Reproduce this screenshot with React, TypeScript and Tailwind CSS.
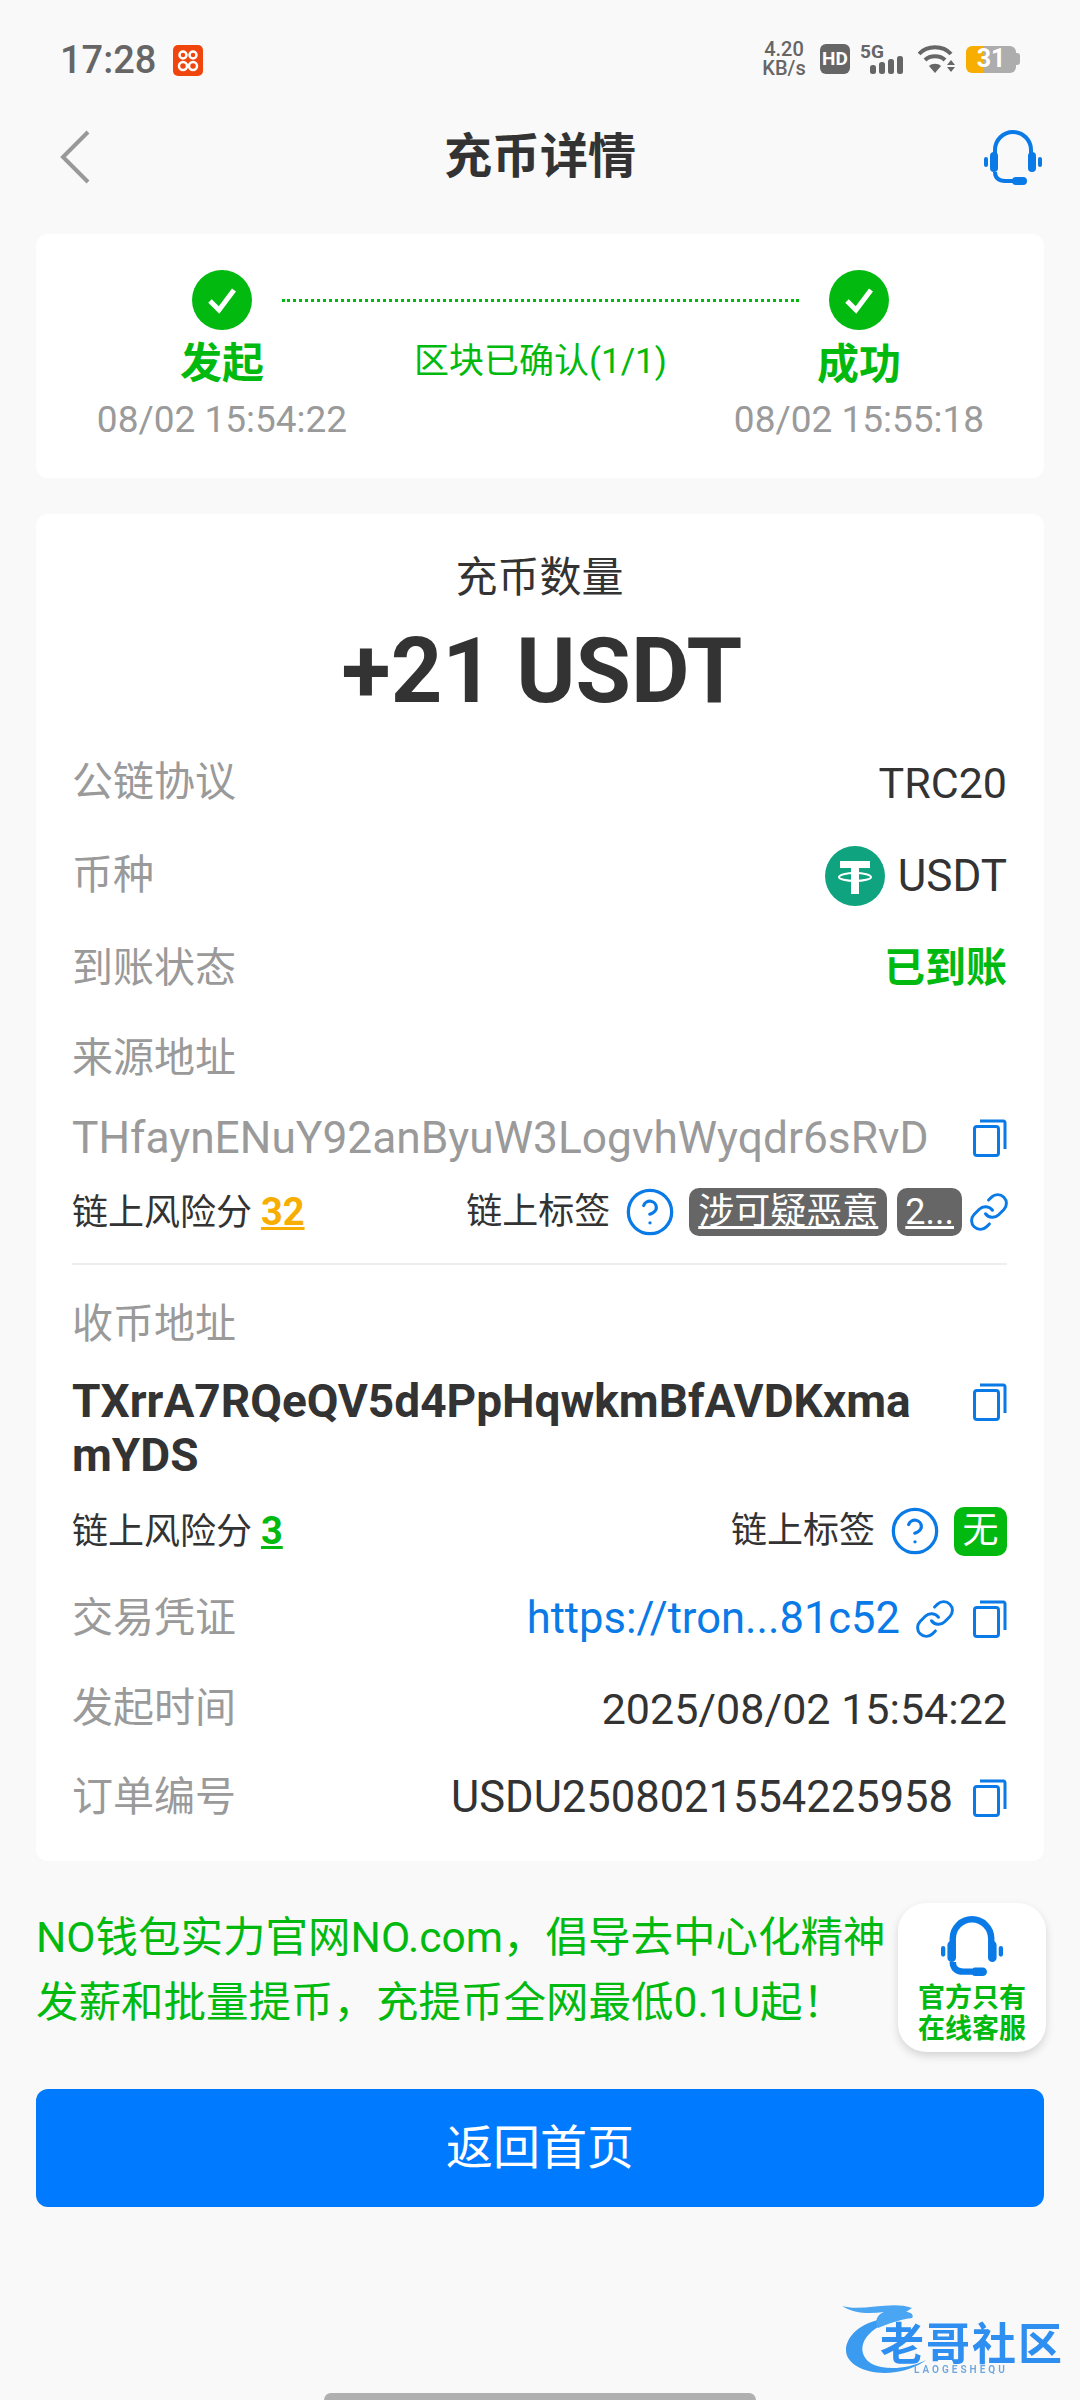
import { CircleHelp, Link } from 'lucide-react';

const green = 'text-[#02b90f]';

function CopyIcon({ className = '' }: { className?: string }) {
  return (
    <svg width="34" height="38" viewBox="0 0 34 38" fill="none" stroke="#0a7ae6" strokeWidth="3" className={`shrink-0 ${className}`}>
      <rect x="1.5" y="7.5" width="24" height="29" rx="2.5" />
      <path d="M7 2h23.5a2 2 0 0 1 1.5 2v26" />
    </svg>
  );
}

function Headset({ size, stroke = 4 }: { size: number; stroke?: number }) {
  return (
    <svg width={size} height={size} viewBox="0 0 58 58" fill="none" className="shrink-0">
      <path d="M11 29V22a18 18 0 0 1 36 0v7" stroke="#0a7ae6" strokeWidth={stroke} />
      <rect x="6" y="24" width="8" height="20" rx="4" fill="#0a7ae6" />
      <rect x="44" y="24" width="8" height="20" rx="4" fill="#0a7ae6" />
      <rect x="0" y="29" width="4" height="10" rx="2" fill="#0a7ae6" />
      <rect x="54" y="29" width="4" height="10" rx="2" fill="#0a7ae6" />
      <path d="M11 44c0 6 4 9 10 9h8" stroke="#0a7ae6" strokeWidth={stroke} />
      <rect x="28" y="49" width="15" height="8" rx="4" fill="#0a7ae6" />
    </svg>
  );
}

function CheckDot() {
  return (
    <svg width="60" height="60" viewBox="0 0 60 60" className="shrink-0">
      <circle cx="30" cy="30" r="30" fill="#02b90f" />
      <path d="M18 31l9 9 15-20" fill="none" stroke="#fff" strokeWidth="5" />
    </svg>
  );
}

function InfoRow({ label, children, className = '' }: { label: string; children?: React.ReactNode; className?: string }) {
  return (
    <div className={`flex h-[60px] items-center justify-between ${className}`}>
      <span className="text-[41px] text-[#9a9a9a]">{label}</span>
      {children}
    </div>
  );
}

function RiskRow({ score, scoreColor, children, className = '' }: { score: string; scoreColor: string; children: React.ReactNode; className?: string }) {
  return (
    <div className={`flex h-[50px] items-center justify-between text-[36px] text-[#333] ${className}`}>
      <span>
        链上风险分 <span className={`text-[38px] font-bold underline ${scoreColor}`}>{score}</span>
      </span>
      <div className="flex items-center">
        <span>链上标签</span>
        <CircleHelp size={52} strokeWidth={1.5} className="ml-[14px] text-[#0a7ae6]" />
        {children}
      </div>
    </div>
  );
}

export default function App() {
  return (
    <div className="relative h-[2400px] w-[1080px] overflow-hidden bg-[#f9f9f9] font-[Roboto,'Noto_Sans_CJK_SC',sans-serif] text-[#333]">
      {/* status bar */}
      <div className="flex h-[118px] items-start justify-between pl-[60px] pr-[60px] pt-[40px]">
        <div className="flex h-[40px] items-center">
          <span className="text-[38px] font-medium text-[#666]">17:28</span>
          <svg width="30" height="31" viewBox="0 0 30 31" className="ml-[17px]">
            <rect width="30" height="31" rx="5" fill="#f0460e" />
            <g fill="none" stroke="#fff" strokeWidth="2.5">
              <circle cx="10" cy="10" r="3.5" />
              <circle cx="20" cy="10" r="3.5" />
              <circle cx="10" cy="21" r="4" />
              <circle cx="20" cy="21" r="4" />
            </g>
          </svg>
        </div>
        <div className="flex items-center text-[#666]">
          <div className="flex w-[50px] flex-col items-center text-[20px] font-medium leading-[19px]">
            <span>4.20</span>
            <span>KB/s</span>
          </div>
          <div className="ml-[11px] flex h-[30px] w-[30px] items-center justify-center rounded-[6px] bg-[#666] text-[19px] font-bold text-white">HD</div>
          <svg width="46" height="32" viewBox="0 0 46 32" className="ml-[10px]">
            <text x="0" y="15" fontSize="19" fontWeight="700" fill="#666" fontFamily="Roboto">5G</text>
            <rect x="10" y="22" width="6" height="9" rx="2.5" fill="#666" />
            <rect x="19" y="19" width="6" height="12" rx="2.5" fill="#666" />
            <rect x="28" y="16" width="6" height="15" rx="2.5" fill="#666" />
            <rect x="37" y="13" width="6" height="18" rx="2.5" fill="#666" />
          </svg>
          <svg width="38" height="30" viewBox="0 0 38 30" className="ml-[12px]">
            <g fill="none" stroke="#666" strokeWidth="4">
              <path d="M1 10c8-9 24-9 32 0" />
              <path d="M7 16c5-5 15-5 20 0" />
            </g>
            <path d="M11 22c3-3 9-3 12 0l-6 7z" fill="#666" />
            <path d="M33 16l4 5h-8zM33 28l4-5h-8z" fill="#666" />
          </svg>
          <div className="ml-[10px] flex items-center">
            <div className="flex h-[27px] w-[50px] items-center justify-center rounded-[6px] bg-[linear-gradient(90deg,#f7ae00_36%,#adadad_36%)] text-[25px] font-bold text-white">31</div>
            <div className="h-[12px] w-[4px] rounded-r-[3px] bg-[#adadad]" />
          </div>
        </div>
      </div>

      {/* nav */}
      <div className="flex h-[78px] items-center px-[38px]">
        <div className="flex-1">
          <svg width="30" height="54" viewBox="0 0 30 54" fill="none" stroke="#999" strokeWidth="4" className="ml-[22px]">
            <path d="M28 2L3 27l25 25" />
          </svg>
        </div>
        <h1 className="text-[48px] font-bold leading-none text-[#333]">充币详情</h1>
        <div className="flex flex-1 justify-end">
          <Headset size={58} />
        </div>
      </div>

      {/* steps card */}
      <div className="mx-[36px] mt-[38px] h-[244px] rounded-[12px] bg-white pt-[36px]">
        <div className="flex items-center gap-[30px] pl-[156px] pr-[155px]">
          <CheckDot />
          <div className="flex-1 border-t-[3px] border-dotted border-[#02b90f]" />
          <CheckDot />
        </div>
        <div className="flex pl-[61px] pr-[62px]">
          <div className="flex w-[250px] flex-col items-center">
            <span className={`h-[66px] text-[42px] font-bold leading-[68px] ${green}`}>发起</span>
            <span className="whitespace-nowrap text-[37px] leading-[48px] text-[#9a9a9a]">08/02 15:54:22</span>
          </div>
          <div className="flex-1 pr-[2px] text-center">
            <span className={`text-[35px] leading-[64px] ${green}`}>区块已确认(1/1)</span>
          </div>
          <div className="flex w-[246px] flex-col items-center">
            <span className={`h-[66px] text-[42px] font-bold leading-[70px] ${green}`}>成功</span>
            <span className="whitespace-nowrap text-[37px] leading-[48px] text-[#9a9a9a]">08/02 15:55:18</span>
          </div>
        </div>
      </div>

      {/* detail card */}
      <div className="mx-[36px] mt-[36px] rounded-[12px] bg-white pb-[33px] pl-[36px] pr-[37px] pt-[34px]">
        <div className="h-[60px] text-center text-[42px] leading-[60px]">充币数量</div>
        <div className="mt-[14px] h-[100px] pl-[5px] text-center text-[90px] font-bold leading-[100px]">+21 USDT</div>

        <InfoRow label="公链协议" className="mt-[31px]">
          <span className="text-[43px]">TRC20</span>
        </InfoRow>
        <InfoRow label="币种" className="mt-[33px]">
          <div className="flex items-center">
            <svg width="60" height="60" viewBox="0 0 60 60">
              <circle cx="30" cy="30" r="30" fill="#0fa37f" />
              <path d="M15 15h30v7H34v7.5l-8 0V22H15z" fill="#fff" />
              <rect x="26" y="24" width="8" height="24" fill="#fff" />
              <ellipse cx="30" cy="31" rx="16" ry="4" fill="none" stroke="#fff" strokeWidth="2" />
            </svg>
            <span className="ml-[13px] text-[44px]">USDT</span>
          </div>
        </InfoRow>
        <InfoRow label="到账状态" className="mt-[33px]">
          <span className={`text-[41px] font-bold ${green}`}>已到账</span>
        </InfoRow>
        <InfoRow label="来源地址" className="mt-[30px]" />

        <div className="mt-[19px] flex h-[60px] items-center justify-between">
          <span className="text-[44.3px] text-[#9a9a9a]">THfaynENuY92anByuW3LogvhWyqdr6sRvD</span>
          <CopyIcon />
        </div>

        <RiskRow score="32" scoreColor="text-[#f7ae00]" className="mt-[19px]">
          <span className="ml-[13px] rounded-[10px] bg-[#666] px-[9px] py-[2px] text-[36px] leading-[44px] text-white underline">涉可疑恶意</span>
          <span className="ml-[10px] rounded-[10px] bg-[#666] px-[8px] py-[2px] text-[36px] leading-[44px] text-white underline">2...</span>
          <Link size={42} strokeWidth={1.7} className="-mr-[3px] ml-[6px] text-[#0a7ae6]" />
        </RiskRow>

        <div className="mt-[26px] border-t-[2px] border-[#eeeeee]" />

        <InfoRow label="收币地址" className="mt-[30px]" />

        <div className="mt-[19px] flex items-start justify-between">
          <span className="w-[860px] break-all text-[46px] font-bold leading-[54px] text-[#333]">TXrrA7RQeQV5d4PpHqwkmBfAVDKxmamYDS</span>
          <CopyIcon className="mt-[9px]" />
        </div>

        <RiskRow score="3" scoreColor={green} className="mt-[24px]">
          <span className="ml-[13px] flex h-[49px] w-[53px] items-center justify-center rounded-[10px] bg-[#02b90f] text-[36px] text-white">无</span>
        </RiskRow>

        <InfoRow label="交易凭证" className="mt-[33px]">
          <div className="flex items-center">
            <span className="text-[43.5px] text-[#0a7ae6]">https://tron...81c52</span>
            <Link size={42} strokeWidth={1.7} className="ml-[14px] text-[#0a7ae6]" />
            <CopyIcon className="ml-[17px]" />
          </div>
        </InfoRow>
        <InfoRow label="发起时间" className="mt-[30px]">
          <span className="text-[43px]">2025/08/02 15:54:22</span>
        </InfoRow>
        <InfoRow label="订单编号" className="mt-[29px]">
          <div className="flex items-center">
            <span className="text-[43.5px]">USDU2508021554225958</span>
            <CopyIcon className="ml-[20px]" />
          </div>
        </InfoRow>
      </div>

      {/* notice */}
      <div className={`ml-[36px] mt-[44px] w-[860px] text-[42.5px] leading-[65px] ${green}`}>
        NO钱包实力官网NO.com，倡导去中心化精神发薪和批量提币，充提币全网最低0.1U起！
      </div>

      <div className="mx-[36px] mt-[54px] flex h-[118px] items-center justify-center rounded-[12px] bg-[#007aff] text-[47px] text-white">返回首页</div>

      {/* floating service button */}
      <div className="absolute left-[898px] top-[1903px] flex h-[149px] w-[148px] flex-col items-center rounded-[28px] bg-white pt-[12px] shadow-[0_4px_8px_rgba(0,0,0,0.15)]">
        <Headset size={62} stroke={6} />
        <div className={`mt-[6px] text-center text-[27px] font-bold leading-[31px] ${green}`}>
          官方只有
          <br />
          在线客服
        </div>
      </div>

      {/* watermark */}
      <div className="absolute left-[840px] top-[2300px] h-[80px] w-[240px] blur-[0.6px]">
        <svg width="110" height="78" viewBox="0 0 110 78" className="absolute left-0 top-0">
          <path d="M48 18C18 22 6 38 6 50c0 16 24 26 50 22 12-2 22-6 30-12-20 10-42 10-54 4C18 56 18 38 40 26z" fill="#3a9bf0" />
          <path d="M2 6c20 6 50-6 70 2l-6 4c6 0 8 4 6 6-14 2-24 6-34 10-4-8 0-14 6-16C30 14 14 14 2 6z" fill="#4aa6f2" />
        </svg>
        <span className="absolute left-[40px] top-[18px] whitespace-nowrap text-[44px] font-bold leading-[54px] tracking-[2px] text-[#2f8ff0]">老哥社区</span>
        <span className="absolute left-[74px] top-[62px] whitespace-nowrap text-[10px] font-semibold tracking-[3px] text-[#6fa7dc]">LAOGESHEQU</span>
      </div>

      {/* home indicator */}
      <div className="absolute bottom-0 left-[324px] h-[7px] w-[432px] rounded-t-full bg-[#b0b0b0]" />
    </div>
  );
}
